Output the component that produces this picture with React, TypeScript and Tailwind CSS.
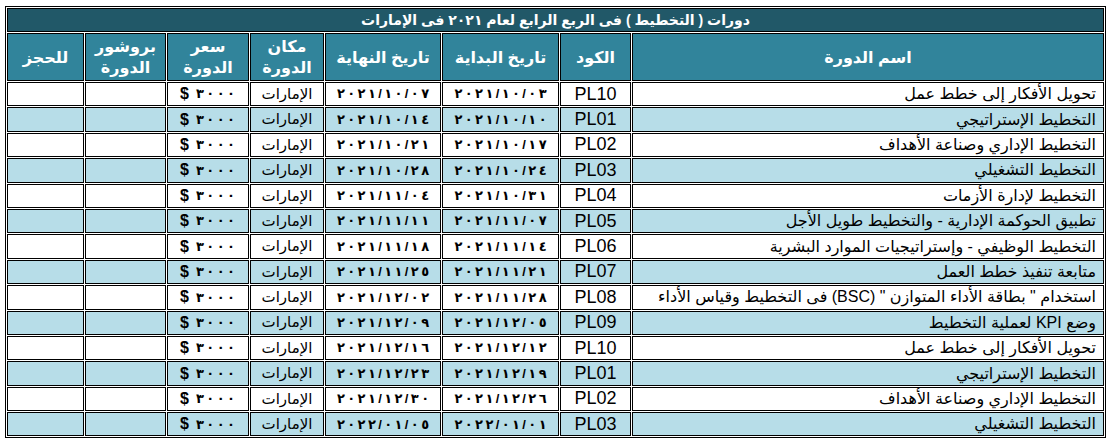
import React from "react";

type Row = { name: string; code: string; start: string; end: string };

const rows: Row[] = [
  { name: "تحويل الأفكار إلى خطط عمل", code: "PL10", start: "٢٠٢١/١٠/٠٣", end: "٢٠٢١/١٠/٠٧" },
  { name: "التخطيط الإستراتيجي", code: "PL01", start: "٢٠٢١/١٠/١٠", end: "٢٠٢١/١٠/١٤" },
  { name: "التخطيط الإداري وصناعة الأهداف", code: "PL02", start: "٢٠٢١/١٠/١٧", end: "٢٠٢١/١٠/٢١" },
  { name: "التخطيط التشغيلي", code: "PL03", start: "٢٠٢١/١٠/٢٤", end: "٢٠٢١/١٠/٢٨" },
  { name: "التخطيط لإدارة الأزمات", code: "PL04", start: "٢٠٢١/١٠/٣١", end: "٢٠٢١/١١/٠٤" },
  { name: "تطبيق الحوكمة الإدارية - والتخطيط طويل الأجل", code: "PL05", start: "٢٠٢١/١١/٠٧", end: "٢٠٢١/١١/١١" },
  { name: "التخطيط الوظيفي - وإستراتيجيات الموارد البشرية", code: "PL06", start: "٢٠٢١/١١/١٤", end: "٢٠٢١/١١/١٨" },
  { name: "متابعة تنفيذ خطط العمل", code: "PL07", start: "٢٠٢١/١١/٢١", end: "٢٠٢١/١١/٢٥" },
  { name: "استخدام \" بطاقة الأداء المتوازن \" (BSC) فى التخطيط وقياس الأداء", code: "PL08", start: "٢٠٢١/١١/٢٨", end: "٢٠٢١/١٢/٠٢" },
  { name: "وضع KPI لعملية التخطيط", code: "PL09", start: "٢٠٢١/١٢/٠٥", end: "٢٠٢١/١٢/٠٩" },
  { name: "تحويل الأفكار إلى خطط عمل", code: "PL10", start: "٢٠٢١/١٢/١٢", end: "٢٠٢١/١٢/١٦" },
  { name: "التخطيط الإستراتيجي", code: "PL01", start: "٢٠٢١/١٢/١٩", end: "٢٠٢١/١٢/٢٣" },
  { name: "التخطيط الإداري وصناعة الأهداف", code: "PL02", start: "٢٠٢١/١٢/٢٦", end: "٢٠٢١/١٢/٣٠" },
  { name: "التخطيط التشغيلي", code: "PL03", start: "٢٠٢٢/٠١/٠١", end: "٢٠٢٢/٠١/٠٥" },
];

const font = { fontFamily: '"Liberation Sans", "DejaVu Sans", Arial, sans-serif' };

const cell = "border border-black flex items-center overflow-hidden whitespace-nowrap";

function Spaced({ text }: { text: string }) {
  return (
    <span>
      {Array.from(text).map((ch, i) => (
        <span key={i} className="px-[1.2px]">
          {ch}
        </span>
      ))}
    </span>
  );
}

export default function App() {
  return (
    <div className="bg-white w-[1115px] h-[448px] pt-[6px] pl-[5px]" style={font}>
      <div dir="rtl" className="w-[1101px] border border-black p-[1px]">
        <div className="grid grid-cols-[472px_71px_117px_116px_74px_82px_81px_77px] gap-[1px] grid-rows-[24px_48px_repeat(14,24.4px)]">
          <div className={`${cell} col-span-8 justify-center bg-[#215868] text-white font-bold text-[14px]`}>
            دورات ( التخطيط ) فى الربع الرابع لعام ٢٠٢١ فى الإمارات
          </div>
          {[
            ["اسم الدورة"],
            ["الكود"],
            ["تاريخ البداية"],
            ["تاريخ النهاية"],
            ["مكان", "الدورة"],
            ["سعر", "الدورة"],
            ["بروشور", "الدورة"],
            ["للحجز"],
          ].map((lines, i) => (
            <div
              key={i}
              className={`${cell} flex-col justify-center bg-[#31849b] text-white font-bold text-[16px] leading-[21px] text-center`}
            >
              {lines.map((l, j) => (
                <span key={j}>{l}</span>
              ))}
            </div>
          ))}
          {rows.map((r, i) => {
            const bg = i % 2 === 0 ? "bg-white" : "bg-[#b7dde8]";
            return (
              <React.Fragment key={i}>
                <div className={`${cell} ${bg} justify-start pr-[7px] text-[16px] text-black`}>{r.name}</div>
                <div className={`${cell} ${bg} justify-center text-[18px] text-black`} style={{ fontFamily: '"Liberation Sans", Arial, sans-serif' }}>
                  {r.code}
                </div>
                <div className={`${cell} ${bg} justify-center text-[13px] font-bold text-black`}>
                  <Spaced text={r.start} />
                </div>
                <div className={`${cell} ${bg} justify-center text-[13px] font-bold text-black`}>
                  <Spaced text={r.end} />
                </div>
                <div className={`${cell} ${bg} justify-center text-[15px] text-black`}>الإمارات</div>
                <div className={`${cell} ${bg} justify-center gap-[6px] text-[15px] text-black`}>
                  <span className="font-bold text-[13px]">
                    <Spaced text="٣٠٠٠" />
                  </span>
                  <span className="font-bold text-[16px]">$</span>
                </div>
                <div className={`${cell} ${bg}`}></div>
                <div className={`${cell} ${bg}`}></div>
              </React.Fragment>
            );
          })}
        </div>
      </div>
    </div>
  );
}
